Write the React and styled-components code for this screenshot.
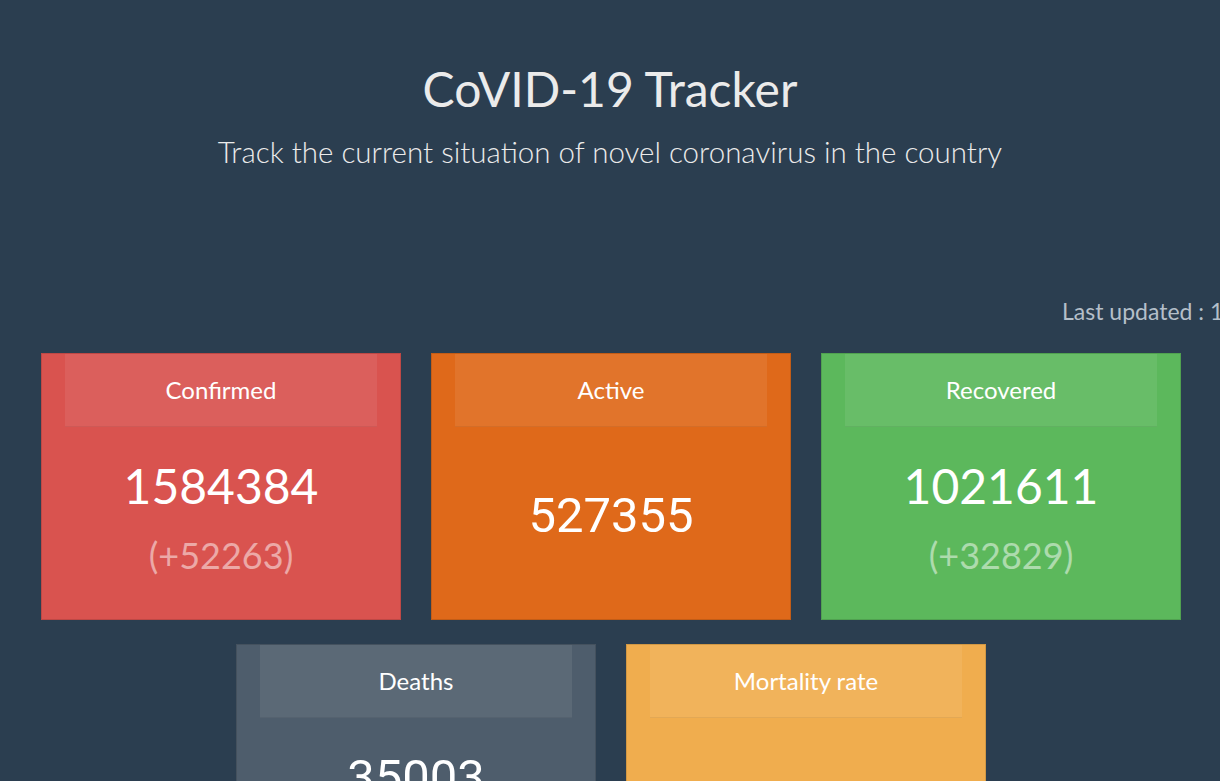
import React from "react";
import styled, { createGlobalStyle } from "styled-components";

const Global = createGlobalStyle`
  html, body { margin: 0; padding: 0; background: #2b3e50; overflow: hidden; }
  body { font-family: Lato, "Open Sans", sans-serif; color: #ebebeb; }
`;

const Page = styled.div`
  width: 1220px;
  min-height: 781px;
  display: flex;
  flex-direction: column;
  align-items: center;
`;

const Header = styled.header`
  padding-top: 60px;
  display: flex;
  flex-direction: column;
  align-items: center;
`;

const Title = styled.h1`
  margin: 0;
  font-size: 48px;
  font-weight: 400;
  line-height: 1.2;
  color: #ebebeb;
`;

const Subtitle = styled.p`
  margin: 16px 0 0;
  font-size: 29.5px;
  font-weight: 300;
  line-height: 1.2;
  color: #ebebeb;
`;

const UpdatedRow = styled.div`
  align-self: stretch;
  display: flex;
  justify-content: flex-end;
  margin-top: 129px;
  margin-right: -242px;
`;

const Updated = styled.span`
  width: 400px;
  white-space: nowrap;
  font-size: 23px;
  line-height: 1.2;
  color: #b4bfc9;
`;

const Grid = styled.div`
  margin: 27px 0 0 2px;
  display: flex;
  flex-wrap: wrap;
  justify-content: center;
  gap: 24px 30px;
  width: 1140px;
`;

const Card = styled.div`
  width: 360px;
  height: 267px;
  box-sizing: border-box;
  background: ${(p) => p.$bg};
  border: 1px solid rgba(0, 0, 0, 0.12);
  display: flex;
  flex-direction: column;
`;

const CardHeader = styled.div`
  margin: 0 23px;
  height: 73px;
  flex: none;
  box-sizing: border-box;
  display: flex;
  align-items: center;
  justify-content: center;
  background: rgba(255, 255, 255, 0.075);
  border-bottom: 1px solid rgba(0, 0, 0, 0.06);
  font-size: 24px;
  color: #ffffff;
`;

const CardBody = styled.div`
  flex: 1;
  display: flex;
  flex-direction: column;
  align-items: center;
  justify-content: center;
  padding-bottom: 13px;
`;

const Count = styled.div`
  font-family: ${(p) => (p.$alt ? "Roboto, Lato, sans-serif" : "Lato, sans-serif")};
  font-size: ${(p) => (p.$alt ? "49px" : "48px")};
  line-height: 1.3;
  color: #ffffff;
`;

const Delta = styled.div`
  font-size: 36px;
  font-weight: 400;
  line-height: 1.2;
  color: rgba(255, 255, 255, 0.5);
  margin-top: 16px;
`;

const cards = [
  { title: "Confirmed", bg: "#d9534f", count: "1584384", delta: "(+52263)" },
  { title: "Active", bg: "#df691a", count: "527355", alt: true },
  { title: "Recovered", bg: "#5cb85c", count: "1021611", delta: "(+32829)" },
  { title: "Deaths", bg: "#4e5d6c", count: "35003", alt: true, delta: "(+775)" },
  { title: "Mortality rate", bg: "#f0ad4e", count: "2.21%", alt: true },
];

export default function App() {
  return (
    <Page>
      <Global />
      <Header>
        <Title>CoVID-19 Tracker</Title>
        <Subtitle>Track the current situation of novel coronavirus in the country</Subtitle>
      </Header>
      <UpdatedRow>
        <Updated>Last updated : 17/07/2020, 10:45:12</Updated>
      </UpdatedRow>
      <Grid>
        {cards.map((c) => (
          <Card key={c.title} $bg={c.bg}>
            <CardHeader>{c.title}</CardHeader>
            <CardBody>
              <Count $alt={c.alt}>{c.count}</Count>
              {c.delta && <Delta>{c.delta}</Delta>}
            </CardBody>
          </Card>
        ))}
      </Grid>
    </Page>
  );
}
